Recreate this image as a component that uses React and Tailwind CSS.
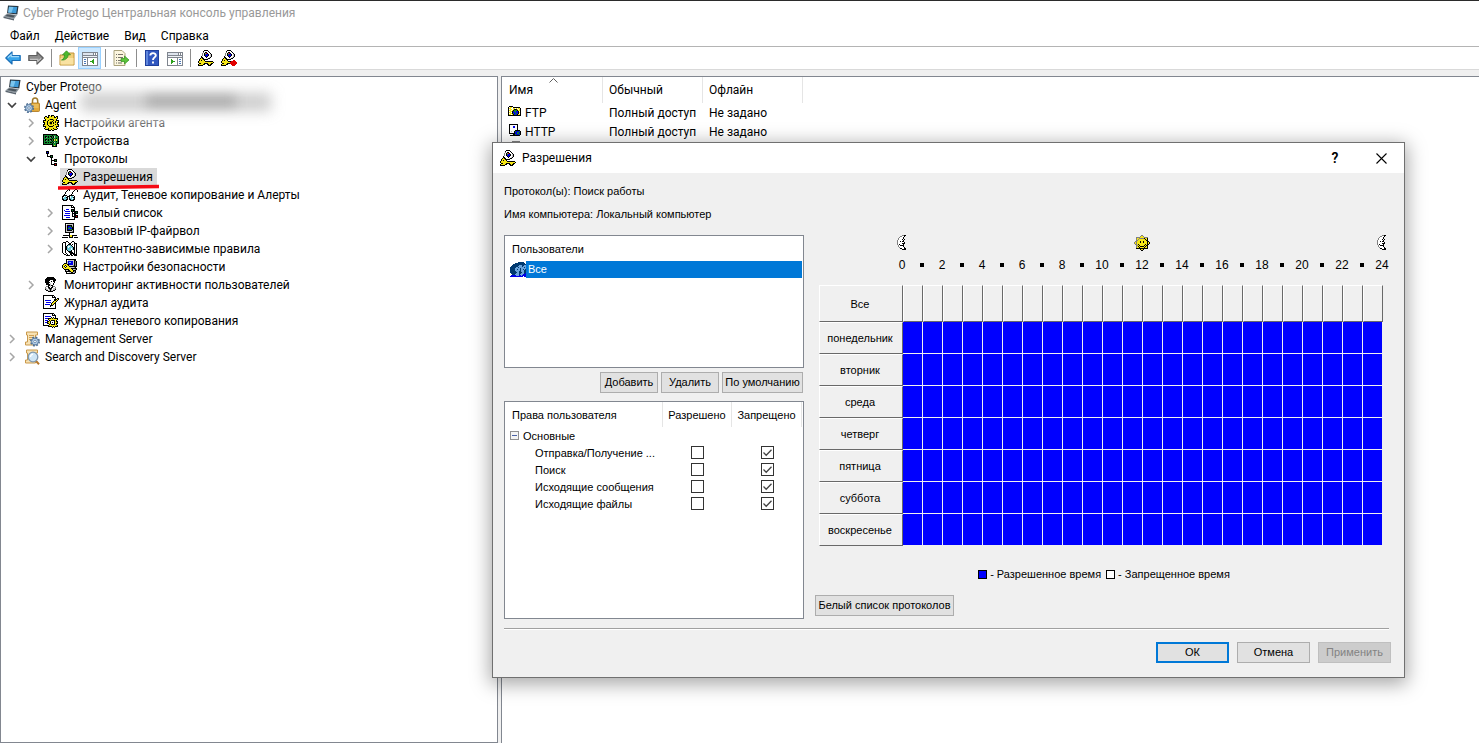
import React, { useState } from 'react';

const PALETTE = {
    k: '#000000',
    w: '#ffffff',
    y: '#f5e616',
    o: '#a8a000',
    g: '#808080',
    l: '#c6c6c6',
    b: '#0000e8',
    n: '#003a70',
    c: '#6cc8d8',
    e: '#108a30',
    s: '#6aa4dc',
    r: '#e00000',
};

// 16px bitmap icons, one character per pixel
const SPRITES = {
    key: [
        '......kkkk......',
        '.....kwwwwk.....',
        '.....gwkkwwk....',
        '....gwkgrkwwk...',
        '....gwkebbkwlk..',
        '....gwkbbbkwlk..',
        '...kwwwkbkwwlk..',
        '...kkwwwkwwlk...',
        '..kykkwwwlkk....',
        '.kyyykkkkk......',
        '.kykyyk.........',
        'kyyyyyykkkkkkkk.',
        'kyyyyyyyyyyyyyyk',
        '.kkyyykkkkyyykk.',
        'kyyyykk..kkykk..',
        'kkkkk.....kkk...',
    ],
    keyRed: [
        '......kkkk......',
        '.....kwwwwk.....',
        '.....gwkkwwk....',
        '....gwkgrkwwk...',
        '....gwkebbkwlk..',
        '....gwkbbbkwlk..',
        '...kwwwkbkwwlk..',
        '...kkwwwkwwlk...',
        '..kykkwwwlkk....',
        '.kyyykkkkk......',
        '.kykyyk.....rr..',
        'kyyyyyykkkrrrrr.',
        'kyyyyyyyyrrrrrrr',
        '.kkyyykkkrrrrrrr',
        'kyyyykk...rrrrr.',
        'kkkkk......rrr..',
    ],
    gear: [
        '.....kk.kkk.....',
        '..kk.kyykyyk.kk.',
        '.kyykkyyyyykkyk.',
        '.kyyyyyyyyyyyyk.',
        '..kyyyokkkoyyk..',
        'kkkyykyyyykyykkk',
        'kyyykyyookyykyyk',
        'kkyykyokkykykykk',
        '.kyykyokkykyyyk.',
        'kkyykyyooyyykykk',
        'kyyyykyyyykyyyyk',
        'kkkyyykkkkyyykkk',
        '..kyyyyyyyyyyk..',
        '.kyyykyyyykyyyk.',
        '..kkkkyykyykkk..',
        '.....kkk.kk.....',
    ],
    board: [
        '................',
        'kkkkkkkkkkkkkk..',
        'keeeeeeeekeeekk.',
        'kekkekekkekleeek',
        'kekgekegkekleeek',
        'keeeeeeeekeeekek',
        'kekkekekkekyeyek',
        'kekgekegkekyeyek',
        'keeeeeeeekeeekek',
        'kekkekekkekleeek',
        'keeeeeeeekeeekkk',
        'kkkkkkkkkkeeek..',
        '.........keyek..',
        '.........kkkkk..',
        '................',
        '................',
    ],
    tree: [
        '...kkk..........',
        '...kbk..........',
        '...kkk..........',
        '....k...........',
        '....k..kkk......',
        '....kkkkek......',
        '.......kkk......',
        '........k.......',
        '........k..kkk..',
        '........kkkkek..',
        '........k..kkk..',
        '........k.......',
        '........k..kkk..',
        '........kkkkrk..',
        '...........kkk..',
        '................',
    ],
    glasses: [
        '................',
        '................',
        '......kk.....kk.',
        '.....k.k....k..k',
        '....k......k...k',
        '...k......k.....',
        '...k......k.....',
        '..k......k......',
        '.kkkk..kkkkk....',
        'kkwcwkkkwccwk...',
        'kwcckk.kwcckk...',
        'kcccck.kccwck...',
        'kkcckk.kkcckk...',
        '.kkkk...kkkk....',
        '................',
        '................',
    ],
    docTree: [
        'kkkkkkkkkkk.....',
        'kwwwwwwwwkwk....',
        'kwwwwwwwwkkkk...',
        'kwwwwwwwwwwwk...',
        'kwwwbbbwwkkkk...',
        'kwbwwwwwwkekk...',
        'kwwbbbbbwkkkkkkk',
        'kwwwwwwwwwkwkkek',
        'kwwbbbbbwwkkkkkk',
        'kwwwwwwwwwkwkk..',
        'kwbbbbbbwwkwkkkk',
        'kwwwwwwwwwkkkkrk',
        'kwwwbbbbwwwwkkkk',
        'kwwwwwwwwwwwk...',
        'kkkkkkkkkkkkk...',
        '................',
    ],
    network: [
        '...kkkkkkkkk....',
        '...kwllllllk....',
        '...klkkkkklk....',
        '...klkbbekgk....',
        '...klkbebekk....',
        '...klkeebbkk....',
        '...klkbbeekk....',
        '...klkkkkklk....',
        '...kllllllgk....',
        '...kkkkkkkkk....',
        '.......k........',
        '.......k........',
        '.kkkkkkkyykkkkk.',
        '.......kyyk.....',
        'kkkkkk.kkkk.kkkk',
        '................',
    ],
    book: [
        '....kk....kk....',
        '.kkkwwk..kwwk...',
        'kwwkwwwkkwwwkkk.',
        'kwwkwwkkkwkwkwk.',
        'kwwkwkccckwwkwk.',
        'kwwkkcwwcckwkwk.',
        'kwwkkcwcccckkwk.',
        'kwwkkccccwckkwk.',
        'kwwkkccccwckkwk.',
        'kwwkwkccckwwkwk.',
        'kwwkwwkkkkwwkwk.',
        'kwwkwwwkkkkwkwk.',
        '.kwwkwwwkkkkkwk.',
        '..kkwkwwkkwkkkk.',
        '....kkkk.kk.kkk.',
        '................',
    ],
    security: [
        '....kkkkkkkkkk..',
        '....kwllllllkk..',
        '....klbbbbblkgk.',
        '....klbccbblkgk.',
        '..kkklbbbbblkgk.',
        '.kyyykkbbbblkgk.',
        'kyykyykllllgkgk.',
        'kykwkyykkkkkkkk.',
        'kyykyyyyllllgk..',
        '.kyyyyyyykkkkkk.',
        '..kkkkkyyykllgk.',
        '...kllkkyyykkk..',
        '...kkkkkkyykgk..',
        '....kwwllkklgk..',
        '....kkkkkkkkk...',
        '................',
    ],
    person: [
        '....kkkkkkk.....',
        '...kkkkkkkkk....',
        '..kkkkkkkkkkk...',
        '..kkkkkwwwkkk...',
        '..kkkkwwkwkk....',
        '..kkkkkwwwwk....',
        '...kkkwlwwk.....',
        '...kkkklwwk.....',
        '.....kklkk......',
        '...ggkwlwkgg....',
        '..gwwkkwkkwwg...',
        '..glwgkkkwllg...',
        '..kllwgkgwllk...',
        '...kkllkllkk....',
        '.....kkkkk......',
        '................',
    ],
    journal: [
        'kkkkkkkkkkk.....',
        'kwwwwwwwwkwk....',
        'kwwwwwwwwkkkk...',
        'kwwwwwwwwwwwk.kk',
        'kwwwwwwwwwwkkkyk',
        'kwbbbbbbwwwkkyk.',
        'kwwwwwwwwwkyyk..',
        'kwwbbbbbwkyyk...',
        'kwwwwwwwkyykk...',
        'kwbbbbbwkykwk...',
        'kwwwwwwkkkwwk...',
        'kwwwwwwkwwwwk...',
        'kwwwwwwwwwwwk...',
        'kkkkkkkkkkkkk...',
        '................',
        '................',
    ],
    docGear: [
        'kkkkkkkkkkk.....',
        'kwwwwwwwwkwk....',
        'kwwwwwwwwkkkk...',
        'kwbbbbbbwwwwk...',
        'kwwwwwwwkwkwk...',
        'kwbbbkkkykykkkk.',
        'kwwwwkyyyyyyyyk.',
        'kwbbbwkykkkkyk..',
        'kwwwkkykwwwkykk.',
        'kwbbkyykwkwkyyk.',
        'kwwwkkykwwwkykk.',
        'kwwwwwkykkkkyk..',
        'kkkkkkyyyyyyyyk.',
        '.....kkkkykykkk.',
        '.........k.k....',
        '................',
    ],
    ftp: [
        '................',
        '.kkkk...........',
        'kwyywkkkkkkk....',
        'kyywwyywywyyk...',
        'kwyywykkkywyk...',
        'kyywykeeekyyk...',
        'kwyykbeebbkwk...',
        'kyywkbbebbkyk...',
        'kwyykebbebkwk...',
        'kyywykbebkyyk...',
        'kkkkkkkkkkkkk...',
        '................',
        '................',
        '................',
        '................',
        '................',
    ],
    http: [
        '.kkkkkkkkk......',
        '.kwwwwwwwk......',
        '.kwwwbbwwk......',
        '.kwwwbbwwk......',
        '.kwwwwwwwk......',
        '.kwwwwwwwk......',
        '.kwwwwwkkkkk....',
        '.kwlwwkebbbek...',
        '.kwwwwkbbeebk...',
        '.kkkkkkbbeebk...',
        '.....kkebbbek...',
        '..kkkkkkkkkk....',
        '................',
        '................',
        '................',
        '................',
    ],
    clock: [
        '....gggggggg....',
        '..ggllllllllgg..',
        '..glwwwwwwwwlg..',
        '.glwwwwkwwwwwlg.',
        '.glwwwwkwwwwwlg.',
        '.glwwwwkkkwwwlg.',
        '.glwwwwwwwwwwlg.',
        '..glwwwwwwwwlg..',
        '..ggllllllllgg..',
        '....gggggggg....',
    ],
    users: [
        '........nnnnnn..',
        '.....nnnnnnnnnn.',
        '...nnnnnnnnnnnnn',
        '..nnnnnnnsssnnss',
        '.nnnnnnnssssnsss',
        'nnnnnnssnsssssns',
        'nnnnnsssssnsssss',
        'nnnnnssnssnssnsn',
        'nnnnnsssssnsssnn',
        'nnnnnnsssnnsssnn',
        'nnnnnnnssnnnssnn',
        '.nnnnnsssnnsssnb',
        '..nnnssssnsssbbb',
        '.bbbbbsssbbsbbbb',
        'bbbbbbbbbbbbb.bb',
        '................',
    ],
    moon: [
        '......ggkk......',
        '....ggwwk.......',
        '...gwwwk........',
        '..gwwwwk........',
        '..gwwwkwk.......',
        '.gwwwwwk........',
        '.gwwkwkk........',
        '.gwwwwwwk.......',
        '.gwwwwkkk.......',
        '.gwkwwwk........',
        '..gwkkkk........',
        '..gwwwwk........',
        '...gwwwwk.......',
        '....kkwwkk......',
        '......kkkk......',
        '................',
    ],
    sun: [
        '.......gg.......',
        '......gyyg......',
        '..ggggyyyygggg..',
        '..gyygggggkyyk..',
        '..gygyyyyyykyk..',
        '..ggyyyyyyyykk..',
        '.ggyyykyykyyykk.',
        'gygyyykyykyyykyk',
        'gygyyyyyyyyyykyk',
        '.ggykyyyyyykykk.',
        '..ggykyyyykykk..',
        '..gykykkkkykyk..',
        '..gyykyyyykyyk..',
        '..kkkkkkkkkkkk..',
        '......kyyk......',
        '.......kk.......',
    ],
};

const Sprite = ({ name }) => (
    <svg width="16" height="16" viewBox="0 0 16 16" shapeRendering="crispEdges" className="shrink-0" aria-hidden="true">
        {SPRITES[name].map((row, y) =>
            [...row.matchAll(/([a-z])\1*/g)].map((run) => (
                <rect key={`${run.index}-${y}`} x={run.index} y={y} width={run[0].length} height="1" fill={PALETTE[run[1]]} />
            ))
        )}
    </svg>
);

const LaptopIcon = () => (
    <svg width="16" height="16" viewBox="0 0 16 16" className="shrink-0" aria-hidden="true">
        <path d="M5 .5 15.5 1 14.3 9.5 4 8.2z" fill="#27343f" />
        <path d="M6 1.7 14.2 2 13.2 8.3 5.2 7.4z" fill="#3f9bd8" />
        <path d="M6 1.7 10.5 1.9 8.5 7.8 5.2 7.4z" fill="#7cc6ee" />
        <path d="M4 8.5 14 10 11 14 .5 11.5z" fill="#8b959d" />
        <path d="M4.4 9.4 12 10.5 10.4 12.6 2.4 11z" fill="#4a545c" />
        <path d="M.5 11.5 11 14 11 15.5.5 13z" fill="#5c6670" />
    </svg>
);

const SmallGear = ({ cx, cy }) => (
    <g>
        <circle cx={cx} cy={cy} r="4" fill="none" stroke="#4d6e92" strokeWidth="2" strokeDasharray="1.8 1.34" />
        <circle cx={cx} cy={cy} r="3.4" fill="#b9d2ea" stroke="#5b7da2" strokeWidth="1" />
        <circle cx={cx} cy={cy} r="1.3" fill="#ffffff" stroke="#5b7da2" strokeWidth=".8" />
    </g>
);

const LockIcon = () => (
    <svg width="16" height="16" viewBox="0 0 16 16" className="shrink-0" aria-hidden="true">
        <path d="M8.5 7V4a2.6 3 0 0 1 5.2 0v3" fill="none" stroke="#a07a28" strokeWidth="1.5" />
        <rect x="7" y="6" width="8.5" height="8.5" rx="1" fill="#e2a93a" stroke="#a9741a" strokeWidth=".8" />
        <path d="M8 8h6.5M8 10h6.5" stroke="#f7d98a" strokeWidth=".8" />
        <SmallGear cx={5} cy={11} />
    </svg>
);

const ScrollShape = () => (
    <g>
        <path d="M2.5 1h11v3h-2v10h-10v-3h2V4h-1z" fill="#f7e2b4" stroke="#c9994b" strokeWidth="1" />
        <path d="M5 4.5h5M5 6.5h5M5 8.5h4" stroke="#c9994b" strokeWidth=".9" />
    </g>
);

const ManagementIcon = () => (
    <svg width="16" height="16" viewBox="0 0 16 16" className="shrink-0" aria-hidden="true">
        <ScrollShape />
        <SmallGear cx={11} cy={10.5} />
    </svg>
);

const DiscoveryIcon = () => (
    <svg width="16" height="16" viewBox="0 0 16 16" className="shrink-0" aria-hidden="true">
        <ScrollShape />
        <path d="m12 12 3 3.2" stroke="#b5762b" strokeWidth="2" />
        <circle cx="9" cy="8" r="4.8" fill="#cfe6f6" stroke="#7f97ad" strokeWidth="1.3" />
        <path d="M6.5 8a3 3 0 0 1 2.5-2.8" fill="none" stroke="#ffffff" strokeWidth="1.2" />
    </svg>
);

const ArrowIcon = ({ color, edge, light, flip }) => (
    <svg width="16" height="14" viewBox="0 0 16 14" className={flip ? 'rotate-180' : ''} aria-hidden="true">
        <path d="M.8 7 7 1v3.5h8.2v5H7V13z" fill={color} stroke={edge} strokeWidth="1.2" strokeLinejoin="round" />
        <path d="M2.8 6.6 6.2 3.6v2h7.8" fill="none" stroke={light} strokeWidth="1.2" />
    </svg>
);

const FolderUpIcon = () => (
    <svg width="16" height="16" viewBox="0 0 16 16" aria-hidden="true">
        <path d="M1 5h8l1-2h5v12H1z" fill="#f0cf7a" stroke="#c09338" strokeWidth="1" />
        <path d="M1.5 8h13v6.5h-13z" fill="#f9e2a2" />
        <path d="M2.5 10C5 9 5.5 7 5.5 4.8H3.5L7.5.8l4 4H9.2C9 8 6.5 10.5 2.5 10z" fill="#4cb82e" stroke="#2e8a1b" strokeWidth=".7" />
    </svg>
);

const PaneIcon = ({ right }) => (
    <svg width="16" height="15" viewBox="0 0 16 15" shapeRendering="crispEdges" aria-hidden="true">
        <rect x="0" y="1" width="16" height="14" fill="#80868f" />
        <rect x="1" y="2" width="10" height="2" fill="#dfe5ee" />
        <path d="M12 2h1v2h-1zM14 2h1v2h-1z" fill="#ffffff" />
        <rect x="1" y="5" width="14" height="1" fill="#eef1f6" />
        <rect x="1" y="7" width="14" height="7" fill="#ffffff" />
        {right ? (
            <g>
                <path d="M10 7h1v7h-1z" fill="#80868f" />
                <path d="M12 8h2v1h-2zM12 10h2v1h-2zM12 12h2v1h-2z" fill="#4a78b8" />
                <path d="M4 8v5l4-2.5z" fill="#2da01c" />
            </g>
        ) : (
            <g>
                <path d="M5 7h1v7H5z" fill="#80868f" />
                <path d="M2 8h2v1H2zM2 10h2v1H2zM2 12h2v1H2z" fill="#4a78b8" />
                <path d="M12 8v5l-4-2.5z" fill="#2da01c" />
            </g>
        )}
    </svg>
);

const ExportIcon = () => (
    <svg width="16" height="16" viewBox="0 0 16 16" aria-hidden="true">
        <path d="M1 .5h8l3 3v12H1z" fill="#fcf6df" stroke="#aaa27c" strokeWidth="1" />
        <path d="M3 4.5h1M5 4.5h5M3 7.5h1M5 7.5h5M3 10.5h1M5 10.5h3M3 13h1M5 13h4" stroke="#77746a" strokeWidth="1" />
        <path d="M8 8.5h3.5V6L16 10l-4.5 4v-2.5H8z" fill="#5cc43c" stroke="#2f8f1d" strokeWidth=".7" />
    </svg>
);

const HelpIcon = () => (
    <svg width="14" height="16" viewBox="0 0 14 16" aria-hidden="true">
        <rect x="0" y="0" width="14" height="16" fill="#1f3f9c" />
        <rect x="1" y="1" width="2" height="14" fill="#5f86dc" />
        <rect x="3" y="1" width="10" height="14" fill="#3157c0" />
        <path d="M5.3 5.6C5.3 2.4 10.8 2.4 10.8 5.4 10.8 7.4 8 7.4 8 10M8 11.5v2" fill="none" stroke="#ffffff" strokeWidth="1.9" />
    </svg>
);

const Chevron = ({ open }) => (
    <svg width="10" height="10" viewBox="0 0 10 10" aria-hidden="true">
        {open ? (
            <path d="m1 3 4 4 4-4" fill="none" stroke="#404040" strokeWidth="1.7" />
        ) : (
            <path d="m3 1 4 4-4 4" fill="none" stroke="#a6a6a6" strokeWidth="1.5" />
        )}
    </svg>
);

const MENU = ['Файл', 'Действие', 'Вид', 'Справка'];

const TREE = [
    { level: 0, label: 'Cyber Protego', icon: <LaptopIcon /> },
    { level: 1, label: 'Agent', icon: <LockIcon />, state: 'open' },
    { level: 2, label: 'Настройки агента', icon: <Sprite name="gear" />, state: 'closed' },
    { level: 2, label: 'Устройства', icon: <Sprite name="board" />, state: 'closed' },
    { level: 2, label: 'Протоколы', icon: <Sprite name="tree" />, state: 'open' },
    { level: 3, label: 'Разрешения', icon: <Sprite name="key" />, selected: true },
    { level: 3, label: 'Аудит, Теневое копирование и Алерты', icon: <Sprite name="glasses" /> },
    { level: 3, label: 'Белый список', icon: <Sprite name="docTree" />, state: 'closed' },
    { level: 3, label: 'Базовый IP-файрвол', icon: <Sprite name="network" />, state: 'closed' },
    { level: 3, label: 'Контентно-зависимые правила', icon: <Sprite name="book" />, state: 'closed' },
    { level: 3, label: 'Настройки безопасности', icon: <Sprite name="security" /> },
    { level: 2, label: 'Мониторинг активности пользователей', icon: <Sprite name="person" />, state: 'closed' },
    { level: 2, label: 'Журнал аудита', icon: <Sprite name="journal" /> },
    { level: 2, label: 'Журнал теневого копирования', icon: <Sprite name="docGear" /> },
    { level: 1, label: 'Management Server', icon: <ManagementIcon />, state: 'closed' },
    { level: 1, label: 'Search and Discovery Server', icon: <DiscoveryIcon />, state: 'closed' },
];

const INDENT = ['pl-0.5', 'pl-1', 'pl-[23px]', 'pl-[42px]'];

const DAYS = ['понедельник', 'вторник', 'среда', 'четверг', 'пятница', 'суббота', 'воскресенье'];
const HOURS = Array.from({ length: 24 }, (_, i) => i);
const MARKS = Array.from({ length: 25 }, (_, i) => i);
const RIGHTS = ['Отправка/Получение ...', 'Поиск', 'Исходящие сообщения', 'Исходящие файлы'];

const ToolButton = ({ label, active, children }) => (
    <button
        aria-label={label}
        className={`flex h-[22px] w-[23px] items-center justify-center border ${active ? 'border-[#99d1ff] bg-[#cce8ff]' : 'border-transparent'}`}
    >
        {children}
    </button>
);

const ToolSeparator = () => (
    <div className="flex w-2 justify-center">
        <div className="h-[18px] w-px bg-[#8d8d8d]" />
    </div>
);

const DialogButton = ({ className, children, ...props }) => (
    <button className={`h-[21px] whitespace-nowrap text-center leading-[17px] ${className}`} {...props}>
        {children}
    </button>
);

const CheckBox = ({ label, checked, onChange }) => (
    <span className="relative mx-auto block size-[13px]">
        <input
            type="checkbox"
            aria-label={label}
            checked={checked}
            onChange={onChange}
            className="block size-[13px] appearance-none border border-[#333333] bg-white"
        />
        {checked && (
            <svg width="13" height="13" viewBox="0 0 13 13" className="pointer-events-none absolute inset-0" aria-hidden="true">
                <path d="m2.5 6.5 2.7 2.7 5.3-5.5" fill="none" stroke="#444444" strokeWidth="1.3" />
            </svg>
        )}
    </span>
);

const NavTree = () => (
    <nav className="relative w-[498px] shrink-0 overflow-hidden border border-[#828790] bg-white pt-px">
        <ul>
            {TREE.map((node) => (
                <li key={node.label} className={`flex h-[18px] items-center ${INDENT[node.level]}`}>
                    {node.level > 0 && (
                        <span className="flex w-[17px] shrink-0 pl-0.5">{node.state && <Chevron open={node.state === 'open'} />}</span>
                    )}
                    <a
                        href="#"
                        className={`flex h-[18px] items-center gap-[5px] whitespace-nowrap pl-0.5 pr-1 ${node.selected ? 'bg-[#d9d9d9]' : ''}`}
                    >
                        {node.icon}
                        {node.label}
                    </a>
                </li>
            ))}
        </ul>

        {/* Hidden computer name */}
        <div className="absolute left-[80px] top-[8px] h-[42px] w-[200px] bg-white/70 blur-[8px]" />
        <div className="absolute left-[80px] top-[16px] h-[18px] w-[190px] bg-[#808080]/40 blur-[7px]" />
        <div className="absolute left-[145px] top-[18px] h-[12px] w-[90px] bg-[#606060]/35 blur-[6px]" />

        {/* Red underline of the selected node */}
        <svg width="102" height="6" viewBox="0 0 102 6" className="absolute left-[57px] top-[107px]" aria-hidden="true">
            <path d="M0 4 101 2.5" stroke="#f50a14" strokeWidth="3.6" />
        </svg>
    </nav>
);

const ProtocolList = () => (
    <section className="min-w-0 flex-1 overflow-hidden border-l border-t border-[#828790] bg-white">
        <table className="w-[301px] table-fixed border-separate border-spacing-0 text-left">
            <thead>
                <tr className="h-[26px]">
                    <th className="relative w-[101px] border-r border-[#e5e5e5] p-0 pl-[7px] font-normal">
                        Имя
                        <svg width="9" height="5" viewBox="0 0 9 5" className="absolute left-[47px] top-px" aria-hidden="true">
                            <path d="m.5 4.5 4-4 4 4" fill="none" stroke="#606060" />
                        </svg>
                    </th>
                    <th className="w-[100px] border-r border-[#e5e5e5] p-0 pl-1.5 font-normal">Обычный</th>
                    <th className="w-[100px] border-r border-[#e5e5e5] p-0 pl-1.5 font-normal">Офлайн</th>
                </tr>
            </thead>
            <tbody>
                {['FTP', 'HTTP'].map((name) => (
                    <tr key={name} className="h-[19px]">
                        <td className="p-0 pl-1.5">
                            <span className="flex h-4 items-center gap-px">
                                <Sprite name={name.toLowerCase()} />
                                {name}
                            </span>
                        </td>
                        <td className="whitespace-nowrap p-0 pl-1.5">Полный доступ</td>
                        <td className="whitespace-nowrap p-0 pl-1.5">Не задано</td>
                    </tr>
                ))}
                <tr className="h-[19px]">
                    <td className="p-0 pl-1.5 align-top">
                        <Sprite name="clock" />
                    </td>
                </tr>
            </tbody>
        </table>
    </section>
);

const Schedule = () => (
    <div className="min-w-0 flex-1">
        <div className="ml-[77px] mr-px flex justify-between">
            <span className="flex w-5 justify-center pl-1"><Sprite name="moon" /></span>
            <span className="flex w-5 justify-center"><Sprite name="sun" /></span>
            <span className="flex w-5 justify-center pl-1"><Sprite name="moon" /></span>
        </div>
        <div className="ml-[77px] mr-px mt-1.5 flex h-4 items-center justify-between text-[12px]">
            {MARKS.map((hour) => (
                <span key={hour} className="flex w-5 justify-center">
                    {hour % 2 === 0 ? hour : <span className="size-1 bg-black" />}
                </span>
            ))}
        </div>

        <div className="ml-1 mr-2.5 mt-3">
            <table className="w-full table-fixed border-separate border-spacing-0">
                <thead>
                    <tr className="h-[37px]">
                        <th className="w-[84px] border border-[#696969] border-l-white border-t-white p-0 pr-0.5 text-center font-normal">Все</th>
                        {HOURS.map((hour) => (
                            <th key={hour} aria-label={`${hour}`} className="border border-[#696969] border-l-white border-t-white p-0" />
                        ))}
                    </tr>
                </thead>
                <tbody>
                    {DAYS.map((day) => (
                        <tr key={day} className="h-8">
                            <th className="border border-[#696969] border-l-white border-t-white p-0 pr-0.5 text-center font-normal">{day}</th>
                            {HOURS.map((hour) => (
                                <td key={hour} className="border-b border-r border-[#f0f0f0] bg-[#0000ff] p-0" />
                            ))}
                        </tr>
                    ))}
                </tbody>
            </table>
        </div>

        <div className="mt-5 flex h-4 items-center justify-center gap-[3px] whitespace-nowrap">
            <span className="size-[9px] border border-black bg-[#0000ff]" />
            <span className="mr-0.5">- Разрешенное время</span>
            <span className="size-[9px] border border-black bg-white" />
            <span>- Запрещенное время</span>
        </div>

        <DialogButton className="mt-[13px] w-[139px] border border-[#adadad] bg-[#e1e1e1]">Белый список протоколов</DialogButton>
    </div>
);

const PermissionsDialog = () => {
    const [allowed, setAllowed] = useState([false, false, false, false]);

    const toggle = (index) => {
        setAllowed(allowed.map((value, i) => (i === index ? !value : value)));
    };

    return (
        <div
            role="dialog"
            aria-labelledby="dialog-title"
            className="absolute left-[492px] top-[141px] w-[913px] border border-[#707070] bg-[#f0f0f0] font-['Liberation_Sans',sans-serif] text-[11px] shadow-[0_4px_18px_2px_rgba(0,0,0,0.35)]"
        >
            {/* Title bar */}
            <div className="flex h-[30px] items-center bg-white pl-[7px] font-['Roboto',sans-serif] text-[12px]">
                <Sprite name="key" />
                <h2 id="dialog-title" className="ml-1.5 flex-1">Разрешения</h2>
                <button aria-label="Справка" className="h-full w-[46px] text-[14px] font-semibold">?</button>
                <button aria-label="Закрыть" className="flex h-full w-[46px] items-center justify-center">
                    <svg width="11" height="11" viewBox="0 0 11 11" aria-hidden="true">
                        <path d="m.5.5 10 10m0-10-10 10" stroke="#000000" strokeWidth="1.1" />
                    </svg>
                </button>
            </div>

            <div className="px-[11px] pb-3.5 pt-2">
                <p className="leading-5">Протокол(ы): Поиск работы</p>
                <p className="mt-[3px] leading-5">Имя компьютера: Локальный компьютер</p>

                <div className="mt-[11px] flex gap-[11px]">
                    <div className="w-[300px] shrink-0">
                        {/* Users */}
                        <div className="h-[133px] border border-[#828790] bg-white">
                            <div className="flex h-[25px] items-center pl-[7px]">Пользователи</div>
                            <ul>
                                <li className="flex h-[17px] items-center pl-[5px] pr-px">
                                    <Sprite name="users" />
                                    <span className="h-full flex-1 bg-[#0078d7] pl-0.5 leading-[17px] text-white">Все</span>
                                </li>
                            </ul>
                        </div>
                        <div className="mt-1 flex justify-end gap-[3px] pr-px">
                            <DialogButton className="w-[58px] border border-[#adadad] bg-[#e1e1e1]">Добавить</DialogButton>
                            <DialogButton className="w-[58px] border border-[#adadad] bg-[#e1e1e1]">Удалить</DialogButton>
                            <DialogButton className="w-[81px] border border-[#adadad] bg-[#e1e1e1]">По умолчанию</DialogButton>
                        </div>

                        {/* Rights */}
                        <div className="mt-2 h-[218px] border border-[#828790] bg-white">
                            <table className="w-[297px] table-fixed border-separate border-spacing-0 text-left">
                                <thead>
                                    <tr className="h-[25px]">
                                        <th className="w-[158px] border-r border-[#e5e5e5] p-0 pl-[7px] font-normal">Права пользователя</th>
                                        <th className="w-[69px] border-r border-[#e5e5e5] p-0 text-center font-normal">Разрешено</th>
                                        <th className="w-[70px] border-r border-[#e5e5e5] p-0 text-center font-normal">Запрещено</th>
                                    </tr>
                                </thead>
                                <tbody>
                                    <tr className="h-[17px]">
                                        <td colSpan={3} className="p-0 pl-[5px]">
                                            <span className="flex h-4 items-center gap-1">
                                                <svg width="9" height="9" viewBox="0 0 9 9" shapeRendering="crispEdges" aria-hidden="true">
                                                    <path d="M.5.5h8v8h-8z" fill="#f4f4f4" stroke="#919191" />
                                                    <path d="M2 4h5v1H2z" fill="#4b63a7" />
                                                </svg>
                                                Основные
                                            </span>
                                        </td>
                                    </tr>
                                    {RIGHTS.map((right, index) => (
                                        <tr key={right} className="h-[17px]">
                                            <td className="whitespace-nowrap p-0 pl-[30px] leading-4">{right}</td>
                                            <td className="p-0">
                                                <CheckBox label={`${right} Разрешено`} checked={allowed[index]} onChange={() => toggle(index)} />
                                            </td>
                                            <td className="p-0">
                                                <CheckBox label={`${right} Запрещено`} checked={!allowed[index]} onChange={() => toggle(index)} />
                                            </td>
                                        </tr>
                                    ))}
                                </tbody>
                            </table>
                        </div>
                    </div>

                    <Schedule />
                </div>

                <div className="mr-1 mt-[9px] h-0.5 border-b border-t border-b-white border-t-[#a0a0a0]" />

                <div className="mr-0.5 mt-3 flex justify-end gap-2">
                    <DialogButton className="w-[73px] border-2 border-[#0078d7] bg-[#e1e1e1]">ОК</DialogButton>
                    <DialogButton className="w-[73px] border border-[#adadad] bg-[#e1e1e1]">Отмена</DialogButton>
                    <DialogButton disabled className="w-[73px] border border-[#bfbfbf] bg-[#cccccc] text-[#838383]">Применить</DialogButton>
                </div>
            </div>
        </div>
    );
};

const App = () => {
    return (
        <div className="relative flex h-screen flex-col overflow-hidden border-t border-[#2b2b2b] bg-[#f0f0f0] font-['Roboto',sans-serif] text-[12px] leading-4 text-black">
            {/* Window title */}
            <header className="flex h-6 items-center gap-1 bg-white pl-[3px] text-[#999999]">
                <LaptopIcon />
                <h1>Cyber Protego Центральная консоль управления</h1>
            </header>

            <nav className="flex h-[21px] items-center gap-[15px] bg-white pl-2.5">
                {MENU.map((item) => (
                    <button key={item}>{item}</button>
                ))}
            </nav>

            <div className="flex h-6 items-center border-b border-t border-b-[#d9d9d9] border-t-[#b4b4b4] bg-white pl-px">
                <ToolButton label="Назад"><ArrowIcon color="#39a5ea" edge="#1a6fb8" light="#a4daf9" /></ToolButton>
                <ToolButton label="Вперед"><ArrowIcon color="#8c8c8c" edge="#5e5e5e" light="#c2c2c2" flip /></ToolButton>
                <ToolSeparator />
                <ToolButton label="Вверх"><FolderUpIcon /></ToolButton>
                <ToolButton label="Дерево консоли" active><PaneIcon /></ToolButton>
                <ToolSeparator />
                <ToolButton label="Экспорт"><ExportIcon /></ToolButton>
                <ToolSeparator />
                <ToolButton label="Справка"><HelpIcon /></ToolButton>
                <ToolButton label="Панель действий"><PaneIcon right /></ToolButton>
                <ToolSeparator />
                <ToolButton label="Разрешения"><Sprite name="key" /></ToolButton>
                <ToolButton label="Сброс разрешений"><Sprite name="keyRed" /></ToolButton>
            </div>

            <main className="mt-1.5 flex min-h-0 flex-1 gap-[3px]">
                <NavTree />
                <ProtocolList />
            </main>

            <PermissionsDialog />
        </div>
    );
};

export default App;
